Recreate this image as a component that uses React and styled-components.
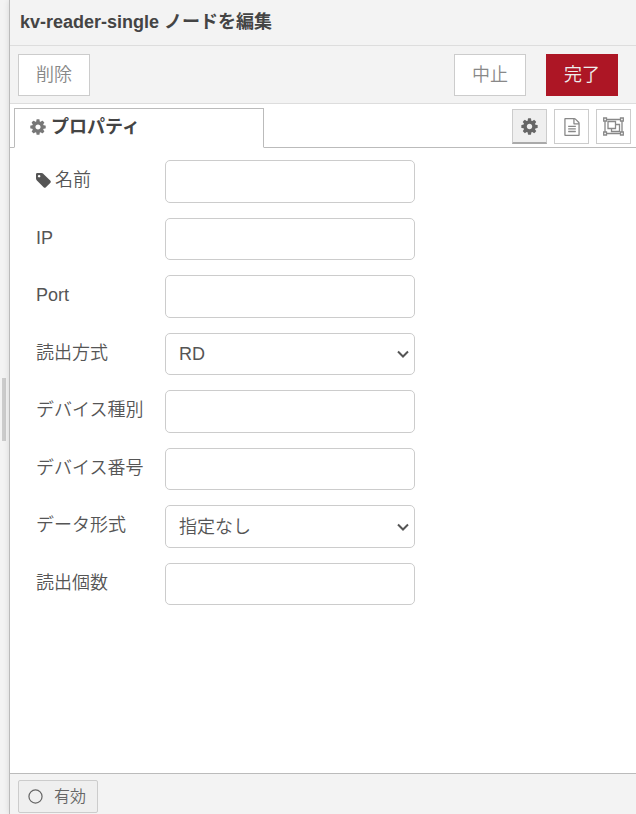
import React, { useState } from "react";
import styled, { createGlobalStyle, css } from "styled-components";

const GlobalStyle = createGlobalStyle`
  *, *::before, *::after { box-sizing: border-box; }
  body {
    margin: 0;
    background: #fff;
    color: #555;
    font: 350 18px/24px "Liberation Sans", "Noto Sans CJK JP", sans-serif;
  }
  button, input, select { font: inherit; color: inherit; margin: 0; }
`;

const Editor = styled.div`
  display: flex;
  min-height: 100vh;
  background: #f3f3f3;
`;

const Separator = styled.div`
  flex: 0 0 9px;
  display: flex;
  align-items: center;
  padding-left: 2px;
`;

const Grip = styled.div`
  width: 4px;
  height: 63px;
  margin-top: 5px;
  background: #ccc;
`;

const Tray = styled.main`
  flex: 1;
  min-width: 0;
  display: flex;
  flex-direction: column;
  border-left: 1px solid #bbb;
  box-shadow: 0 0 6px rgba(0, 0, 0, 0.12);
`;

const Title = styled.h1`
  margin: 0;
  padding: 10px 10px 11px;
  border-bottom: 1px solid #ddd;
  font-size: 18px;
  line-height: 24px;
  font-weight: 700;
  color: #444;
`;

const Toolbar = styled.div`
  display: flex;
  gap: 20px;
  padding: 8px 18px 7px 8px;
  border-bottom: 1px solid #ddd;
`;

const Spacer = styled.div`
  flex: 1;
`;

const ToolbarButton = styled.button`
  height: 42px;
  padding: 0 17px;
  border: 1px solid ${(p) => (p.$primary ? "#ad1625" : "#ccc")};
  background: ${(p) => (p.$primary ? "#ad1625" : "#fff")};
  color: ${(p) => (p.$primary ? "#eee" : "#888")};
  cursor: pointer;
`;

const TabBar = styled.div`
  display: flex;
  align-items: flex-end;
  height: 44px;
  padding: 0 5px 0 4px;
  background: #fff;
  box-shadow: inset 0 -1px #bbb;
`;

const Tab = styled.button`
  display: flex;
  align-items: center;
  gap: 4px;
  width: 250px;
  height: 40px;
  padding: 0 14px 2px;
  border: 1px solid #bbb;
  border-bottom-color: #fff;
  background: #fff;
  color: #444;
  font-weight: 700;
  text-align: left;
`;

const TabTools = styled.div`
  display: flex;
  gap: 7px;
  margin-left: auto;
  padding-bottom: 4px;
`;

const TabTool = styled.button`
  display: flex;
  align-items: center;
  justify-content: center;
  width: 35px;
  height: 35px;
  padding: 0;
  border: 1px solid #ccc;
  background: #fff;
  color: #888;
  cursor: pointer;
  ${(p) =>
    p.$selected &&
    css`
      background: #efefef;
      border-bottom: 2px solid #aaa;
      color: #666;
    `}
`;

const Icon = styled.svg`
  flex: none;
  width: ${(p) => p.$size}px;
  height: ${(p) => p.$size}px;
  fill: currentColor;
  color: ${(p) => p.$color || "inherit"};
`;

const Form = styled.form`
  flex: 1;
  display: grid;
  grid-template-columns: 129px minmax(0, 250px);
  grid-auto-rows: 43px 42px;
  row-gap: 15px;
  align-content: start;
  padding: 12px 26px;
  background: #fff;
`;

const Label = styled.label`
  display: flex;
  align-items: center;
  gap: 4px;
  padding-bottom: 3px;
`;

const fieldStyle = css`
  width: 100%;
  height: 100%;
  border: 1px solid #ccc;
  border-radius: 5px;
  background: #fff;
  outline: none;
`;

const TextBox = styled.input`
  ${fieldStyle}
  padding: 0 12px;
`;

const SelectBox = styled.div`
  display: grid;
  align-items: center;

  > * {
    grid-area: 1 / 1;
  }
`;

const Select = styled.select`
  ${fieldStyle}
  appearance: none;
  padding: 0 24px 0 13px;
`;

const Chevron = styled.svg`
  justify-self: end;
  width: 12px;
  height: 8px;
  margin-right: 6px;
  pointer-events: none;
`;

const Footer = styled.footer`
  display: flex;
  padding: 6px 8px 1px;
  border-top: 1px solid #bbb;
`;

const StateButton = styled.button`
  display: flex;
  align-items: center;
  gap: 11px;
  height: 33px;
  padding: 0 11px 0 9px;
  border: 1px solid #ccc;
  border-radius: 2px;
  background: #efefef;
  color: #666;
  font-size: 16px;
  cursor: pointer;
`;

const Cog = (p) => (
  <Icon viewBox="0 0 1792 1792" aria-hidden="true" {...p}>
    <path d="M1152 896q0-106-75-181t-181-75-181 75-75 181 75 181 181 75 181-75 75-181zm512-109v222q0 12-8 23t-20 13l-185 28q-19 54-39 91 35 50 107 138 10 12 10 25t-9 23q-27 37-99 108t-94 71q-12 0-26-9l-138-108q-44 23-91 38-16 136-29 186-7 28-36 28h-222q-14 0-24.500-8.500t-11.500-21.500l-28-184q-49-16-90-37l-141 107q-10 9-25 9-14 0-25-11-126-114-165-168-7-10-7-23 0-12 8-23 15-21 51-66.500t54-70.500q-27-50-41-99l-183-27q-13-2-21-12.500t-8-23.500v-222q0-12 8-23t19-13l186-28q14-46 39-92-40-57-107-138-10-12-10-24 0-10 9-23 26-36 98.500-107.500t94.500-71.500q13 0 26 10l138 107q44-23 91-38 16-136 29-186 7-28 36-28h222q14 0 24.500 8.500t11.500 21.500l28 184q49 16 90 37l142-107q9-9 24-9 13 0 25 10 129 119 165 170 7 8 7 22 0 12-8 23-15 21-51 66.500t-54 70.500q26 50 41 98l183 28q13 2 21 12.500t8 23.500z" />
  </Icon>
);

const Tag = (p) => (
  <Icon viewBox="128 128 1536 1536" aria-hidden="true" {...p}>
    <path d="M576 448q0-53-37.500-90.500t-90.500-37.500-90.500 37.500-37.500 90.500 37.500 90.500 90.500 37.500 90.500-37.500 37.500-90.500zm1067 576q0 53-37 90l-491 492q-39 37-91 37-53 0-90-37l-715-716q-38-37-64.500-101t-26.500-117v-416q0-52 38-90t90-38h416q53 0 117 26.500t102 64.500l715 714q37 39 37 91z" />
  </Icon>
);

const FileText = (p) => (
  <Icon viewBox="0 0 1792 1792" aria-hidden="true" {...p}>
    <path d="M1596 380q28 28 48 76t20 88v1152q0 40-28 68t-68 28h-1344q-40 0-68-28t-28-68v-1600q0-40 28-68t68-28h896q40 0 88 20t76 48zm-444-244v376h376q-10-29-22-41l-313-313q-12-12-41-22zm384 1528v-1024h-416q-40 0-68-28t-28-68v-416h-768v1536h1280zm-1024-864q0-14 9-23t23-9h704q14 0 23 9t9 23v64q0 14-9 23t-23 9h-704q-14 0-23-9t-9-23v-64zm736 224q14 0 23 9t9 23v64q0 14-9 23t-23 9h-704q-14 0-23-9t-9-23v-64q0-14 9-23t23-9h704zm0 256q14 0 23 9t9 23v64q0 14-9 23t-23 9h-704q-14 0-23-9t-9-23v-64q0-14 9-23t23-9h704z" />
  </Icon>
);

const ObjectGroup = (p) => (
  <Icon viewBox="0 0 21 21" aria-hidden="true" {...p}>
    <g fill="none" stroke="currentColor" strokeWidth="1.3">
      <path d="M3.500 3.500h14M3.500 17.500h14M2 5v11M19 5v11" />
      <path d="M.7 2h2.800v3H.7zM17.500 2h2.800v3h-2.800zM.7 16h2.800v3H.7zM17.500 16h2.800v3h-2.800z" />
      <path d="M5 5.500h7.500v7H5zM12.500 8.500h4v7h-8v-3" />
    </g>
  </Icon>
);

const Circle = (p) => (
  <Icon viewBox="0 0 16 16" aria-hidden="true" {...p}>
    <circle cx="8" cy="8" r="7" fill="none" stroke="currentColor" strokeWidth="1.300" />
  </Icon>
);

const fields = [
  { id: "name", label: "名前", icon: true },
  { id: "ip", label: "IP" },
  { id: "port", label: "Port" },
  { id: "method", label: "読出方式", options: ["RD"] },
  { id: "device-type", label: "デバイス種別" },
  { id: "device-number", label: "デバイス番号" },
  { id: "format", label: "データ形式", options: ["指定なし"] },
  { id: "count", label: "読出個数" },
];

const tools = [
  { id: "properties", label: "プロパティ", icon: <Cog $size={19} /> },
  { id: "description", label: "説明", icon: <FileText $size={18} /> },
  { id: "appearance", label: "外観", icon: <ObjectGroup $size={21} /> },
];

export default function App() {
  const [tool, setTool] = useState("properties");
  return (
    <Editor>
      <GlobalStyle />
      <Separator>
        <Grip />
      </Separator>
      <Tray>
        <Title>kv-reader-single ノードを編集</Title>
        <Toolbar>
          <ToolbarButton type="button">削除</ToolbarButton>
          <Spacer />
          <ToolbarButton type="button">中止</ToolbarButton>
          <ToolbarButton type="button" $primary>完了</ToolbarButton>
        </Toolbar>
        <TabBar>
          <Tab type="button">
            <Cog $size={18} $color="#777" />
            プロパティ
          </Tab>
          <TabTools>
            {tools.map((t) => (
              <TabTool
                key={t.id}
                type="button"
                aria-label={t.label}
                $selected={tool === t.id}
                onClick={() => setTool(t.id)}
              >
                {t.icon}
              </TabTool>
            ))}
          </TabTools>
        </TabBar>
        <Form>
          {fields.map((f) => (
            <React.Fragment key={f.id}>
              <Label htmlFor={f.id}>
                {f.icon && <Tag $size={15} />}
                {f.label}
              </Label>
              {f.options ? (
                <SelectBox>
                  <Select id={f.id}>
                    {f.options.map((o) => (
                      <option key={o}>{o}</option>
                    ))}
                  </Select>
                  <Chevron viewBox="0 0 12 8" aria-hidden="true">
                    <path d="M1 1.500l5 5 5-5" fill="none" stroke="#555" strokeWidth="2" />
                  </Chevron>
                </SelectBox>
              ) : (
                <TextBox id={f.id} type="text" />
              )}
            </React.Fragment>
          ))}
        </Form>
        <Footer>
          <StateButton type="button">
            <Circle $size={15} />
            有効
          </StateButton>
        </Footer>
      </Tray>
    </Editor>
  );
}
